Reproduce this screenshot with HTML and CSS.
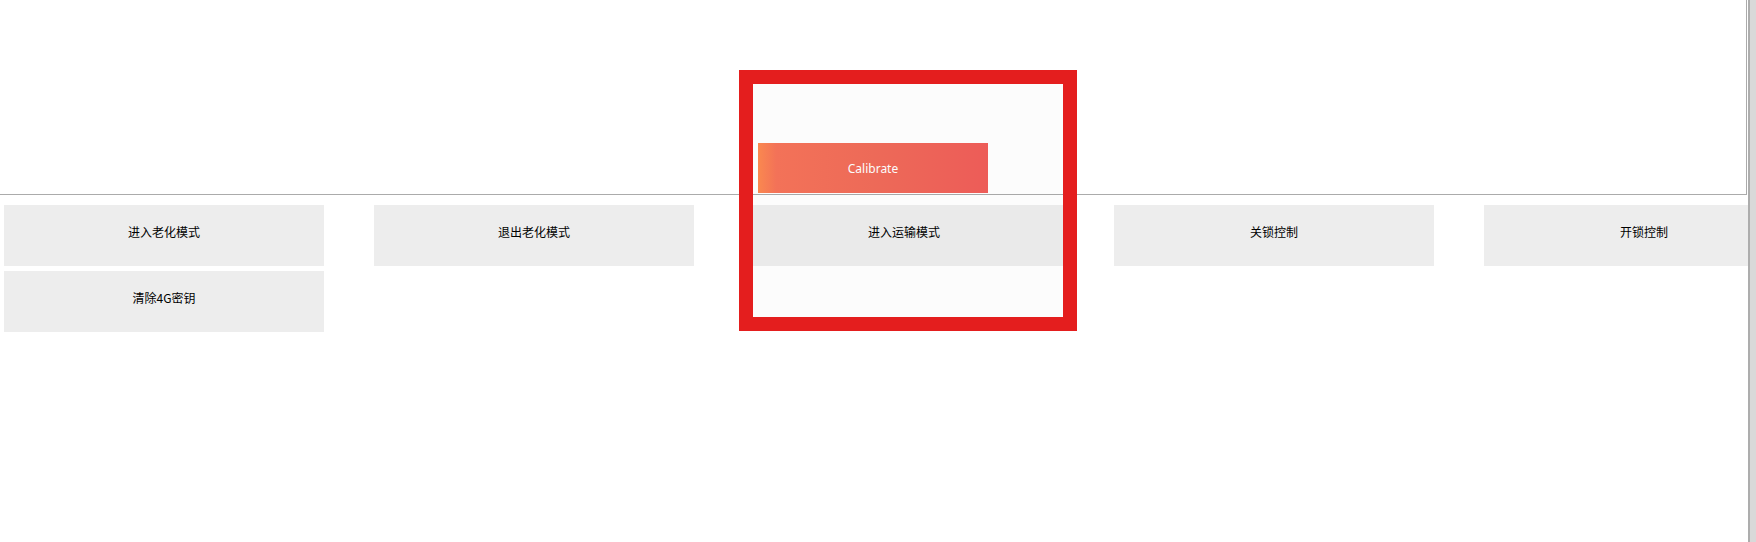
FILE: index.html
```html
<!DOCTYPE html>
<html lang="zh-CN">
<head>
    <meta charset="UTF-8">
    <meta name="viewport" content="width=device-width, initial-scale=1.0">
    <title>设备控制</title>
    <link rel="stylesheet" href="styles.css">
</head>
<body>

<div class="window">
    <div class="main">
        <!-- 上方面板 -->
        <div class="top-panel">
            <button class="calibrate">Calibrate</button>
        </div>

        <!-- 指令按钮 -->
        <div class="cmd-grid">
            <button class="cmd">进入老化模式</button>
            <button class="cmd">退出老化模式</button>
            <button class="cmd">进入运输模式</button>
            <button class="cmd">关锁控制</button>
            <button class="cmd">开锁控制</button>
            <button class="cmd">清除4G密钥</button>
        </div>
    </div>
    <div class="scrollbar"></div>
</div>

<!-- 标注框 -->
<div class="highlight"></div>

</body>
</html>
```

FILE: styles.css
```css
body {
    margin: 0;
    padding: 0;
    background-color: white;
    font-family: "Noto Sans CJK SC", "Noto Sans", sans-serif;
}

.window {
    display: flex;
    width: 1756px;
    height: 542px;
    overflow: hidden;
}

.main {
    width: 1748px;
    overflow: hidden;
}

/* 上方面板 */
.top-panel {
    box-sizing: border-box;
    width: 1747px;
    height: 195px;
    padding: 143px 0 0 758px;
    border-right: 1px solid #ababab;
    border-bottom: 1px solid #ababab;
}

.calibrate {
    display: block;
    width: 230px;
    height: 50px;
    border: none;
    padding: 0;
    background: linear-gradient(90deg, #fd8a50 0%, #f6745a 8%, #f06c5a 50%, #f05e5a 100%);
    color: white;
    font-family: "Noto Sans", "Open Sans", sans-serif;
    font-size: 12px;
}

/* 指令按钮 */
.cmd-grid {
    display: grid;
    grid-template-columns: repeat(5, 320px);
    column-gap: 50px;
    row-gap: 5px;
    padding: 10px 0 0 4px;
}

.cmd {
    display: flex;
    align-items: center;
    justify-content: center;
    height: 61px;
    padding: 0 0 9px 0;
    border: none;
    background-color: #ededed;
    color: black;
    font-family: "Noto Sans CJK SC", sans-serif;
    font-size: 12px;
}

.scrollbar {
    width: 8px;
    height: 542px;
    background-color: #d9d9d9;
    border-left: 2px solid #adadad;
    box-sizing: border-box;
}

.highlight {
    position: absolute;
    left: 739px;
    top: 70px;
    width: 310px;
    height: 233px;
    border: 14px solid #e41e1e;
    background-color: rgba(0, 0, 0, 0.012);
}
```
